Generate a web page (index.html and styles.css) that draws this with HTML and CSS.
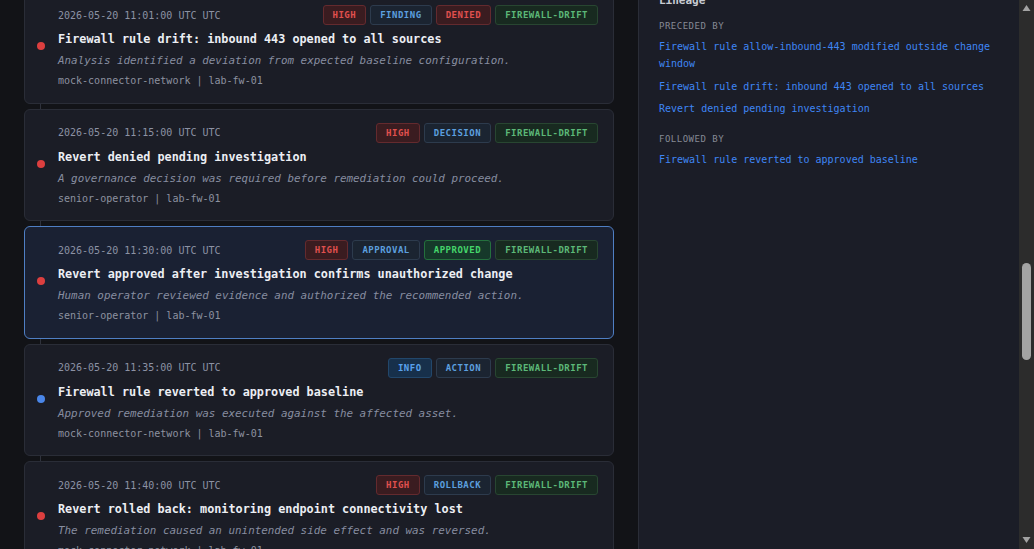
FILE: index.html
```html
<!DOCTYPE html>
<html lang="en">
<head>
    <meta charset="UTF-8">
    <meta name="viewport" content="width=device-width, initial-scale=1.0">
    <title>Event Timeline</title>
    <link rel="stylesheet" href="styles.css">
</head>
<body>
    <div class="app">
        <main class="layout">
            <section class="timeline">
                <article class="event">
                    <span class="dot red"></span>
                    <div class="event-body">
                        <div class="event-head">
                            <span class="time">2026-05-20 11:01:00 UTC UTC</span>
                            <div class="badges">
                                <span class="badge red">HIGH</span>
                                <span class="badge blue">FINDING</span>
                                <span class="badge red">DENIED</span>
                                <span class="badge tag">FIREWALL-DRIFT</span>
                            </div>
                        </div>
                        <div class="event-title">Firewall rule drift: inbound 443 opened to all sources</div>
                        <div class="event-desc">Analysis identified a deviation from expected baseline configuration.</div>
                        <div class="event-meta">mock-connector-network | lab-fw-01</div>
                    </div>
                </article>

                <article class="event">
                    <span class="dot red"></span>
                    <div class="event-body">
                        <div class="event-head">
                            <span class="time">2026-05-20 11:15:00 UTC UTC</span>
                            <div class="badges">
                                <span class="badge red">HIGH</span>
                                <span class="badge blue">DECISION</span>
                                <span class="badge tag">FIREWALL-DRIFT</span>
                            </div>
                        </div>
                        <div class="event-title">Revert denied pending investigation</div>
                        <div class="event-desc">A governance decision was required before remediation could proceed.</div>
                        <div class="event-meta">senior-operator | lab-fw-01</div>
                    </div>
                </article>

                <article class="event selected">
                    <span class="dot red"></span>
                    <div class="event-body">
                        <div class="event-head">
                            <span class="time">2026-05-20 11:30:00 UTC UTC</span>
                            <div class="badges">
                                <span class="badge red">HIGH</span>
                                <span class="badge blue">APPROVAL</span>
                                <span class="badge green">APPROVED</span>
                                <span class="badge tag">FIREWALL-DRIFT</span>
                            </div>
                        </div>
                        <div class="event-title">Revert approved after investigation confirms unauthorized change</div>
                        <div class="event-desc">Human operator reviewed evidence and authorized the recommended action.</div>
                        <div class="event-meta">senior-operator | lab-fw-01</div>
                    </div>
                </article>

                <article class="event">
                    <span class="dot blue"></span>
                    <div class="event-body">
                        <div class="event-head">
                            <span class="time">2026-05-20 11:35:00 UTC UTC</span>
                            <div class="badges">
                                <span class="badge info">INFO</span>
                                <span class="badge blue">ACTION</span>
                                <span class="badge tag">FIREWALL-DRIFT</span>
                            </div>
                        </div>
                        <div class="event-title">Firewall rule reverted to approved baseline</div>
                        <div class="event-desc">Approved remediation was executed against the affected asset.</div>
                        <div class="event-meta">mock-connector-network | lab-fw-01</div>
                    </div>
                </article>

                <article class="event">
                    <span class="dot red"></span>
                    <div class="event-body">
                        <div class="event-head">
                            <span class="time">2026-05-20 11:40:00 UTC UTC</span>
                            <div class="badges">
                                <span class="badge red">HIGH</span>
                                <span class="badge blue">ROLLBACK</span>
                                <span class="badge tag">FIREWALL-DRIFT</span>
                            </div>
                        </div>
                        <div class="event-title">Revert rolled back: monitoring endpoint connectivity lost</div>
                        <div class="event-desc">The remediation caused an unintended side effect and was reversed.</div>
                        <div class="event-meta">mock-connector-network | lab-fw-01</div>
                    </div>
                </article>
            </section>

            <aside class="panel">
                <div class="lineage">
                    <h3 class="panel-title">Lineage</h3>
                    <div class="lineage-label">Preceded by</div>
                    <ul class="lineage-list">
                        <li><a href="#">Firewall rule allow-inbound-443 modified outside change window</a></li>
                        <li><a href="#">Firewall rule drift: inbound 443 opened to all sources</a></li>
                        <li><a href="#">Revert denied pending investigation</a></li>
                    </ul>
                    <div class="lineage-label followed">Followed by</div>
                    <ul class="lineage-list">
                        <li><a href="#">Firewall rule reverted to approved baseline</a></li>
                    </ul>
                </div>
            </aside>
        </main>

        <div class="scrollbar">
            <svg class="arrow" width="15" height="17" viewBox="0 0 15 17"><polygon points="7.5,5 11.5,11 3.5,11" fill="#a3a3a3"/></svg>
            <div class="thumb"></div>
            <div class="track-rest"></div>
            <svg class="arrow" width="15" height="17" viewBox="0 0 15 17"><polygon points="3.5,5 11.5,5 7.5,11" fill="#a3a3a3"/></svg>
        </div>
    </div>
</body>
</html>
```

FILE: styles.css
```css
body {
    margin: 0;
    height: 100vh;
    overflow: hidden;
    background-color: #121317;
    font-family: "DejaVu Sans Mono", monospace;
    color: #e6e8ee;
}
.app {
    display: flex;
    height: 100vh;
}
.layout {
    flex: 1;
    display: grid;
    grid-template-columns: 614px 1fr;
    min-width: 0;
}
.timeline {
    display: flex;
    flex-direction: column;
    gap: 5px;
    margin-top: -9px;
    padding: 0 0 0 24px;
    background-image: linear-gradient(to right, transparent 40px, #2f323c 40px, #2f323c 41px, transparent 41px);
}
.event {
    display: flex;
    align-items: center;
    gap: 13px;
    padding: 13px 15px 13.5px 12px;
    background-color: #1b1d26;
    border: 1px solid #2a2d37;
    border-radius: 6px;
}
.event.selected {
    background-color: #1a2133;
    border-color: #4f7fc4;
}
.dot {
    flex: none;
    width: 8px;
    height: 8px;
    border-radius: 50%;
    margin-top: -2px;
}
.dot.red {
    background-color: #dc3f3f;
}
.dot.blue {
    background-color: #4a86e8;
}
.event-body {
    flex: 1;
    min-width: 0;
}
.event-head {
    display: flex;
    justify-content: space-between;
    align-items: center;
    height: 20px;
}
.time {
    font-size: 10px;
    color: #8c92a4;
}
.badges {
    display: flex;
    gap: 4px;
}
.badge {
    height: 18px;
    line-height: 18px;
    padding: 0 9px;
    font-size: 9px;
    font-weight: bold;
    letter-spacing: 0.5px;
    border: 1px solid;
    border-radius: 3px;
}
.badge.red {
    color: #e0504e;
    background-color: #3a1c20;
    border-color: #642a2e;
}
.badge.blue {
    color: #5c9fdf;
    background-color: #1b2431;
    border-color: #2d3b4d;
}
.badge.info {
    color: #5aa2ee;
    background-color: #17304b;
    border-color: #22476b;
}
.badge.tag {
    color: #5cb878;
    background-color: #182a20;
    border-color: #284631;
}
.badge.green {
    color: #45d56b;
    background-color: #16382a;
    border-color: #24703d;
}
.event-title {
    margin-top: 5px;
    font-size: 11.8px;
    line-height: 18px;
    font-weight: bold;
    color: #eceef3;
}
.event-desc {
    margin-top: 4px;
    font-size: 10.9px;
    line-height: 18px;
    font-style: italic;
    color: #878da0;
}
.event-meta {
    margin-top: 3px;
    font-size: 10px;
    line-height: 16px;
    color: #8d92a0;
}
.panel {
    margin-left: 24px;
    padding: 0 20px;
    background-color: #1b1d27;
    border-left: 1px solid #2a2d37;
}
.lineage {
    margin-top: -7px;
}
.panel-title {
    margin: 0;
    font-size: 11px;
    line-height: 16px;
    font-weight: bold;
    color: #c8cbd3;
}
.lineage-label {
    margin-top: 10px;
    font-size: 9px;
    line-height: 14px;
    letter-spacing: 0.5px;
    text-transform: uppercase;
    color: #868a95;
}
.lineage-label.followed {
    margin-top: 15px;
}
.lineage-list {
    list-style: none;
    margin: 5px 0 0 0;
    padding: 0;
    display: flex;
    flex-direction: column;
    gap: 5.5px;
    font-size: 10px;
    line-height: 17px;
}
.lineage-list a {
    color: #3f86f5;
    text-decoration: none;
}
.scrollbar {
    flex: none;
    width: 15px;
    display: flex;
    flex-direction: column;
    align-items: center;
    background-color: #2c2c2c;
}
.arrow {
    flex: none;
    display: block;
}
.thumb {
    flex: none;
    width: 9px;
    height: 97px;
    margin-top: 246px;
    border-radius: 5px;
    background-color: #a3a3a3;
}
.track-rest {
    flex: 1;
}
```
